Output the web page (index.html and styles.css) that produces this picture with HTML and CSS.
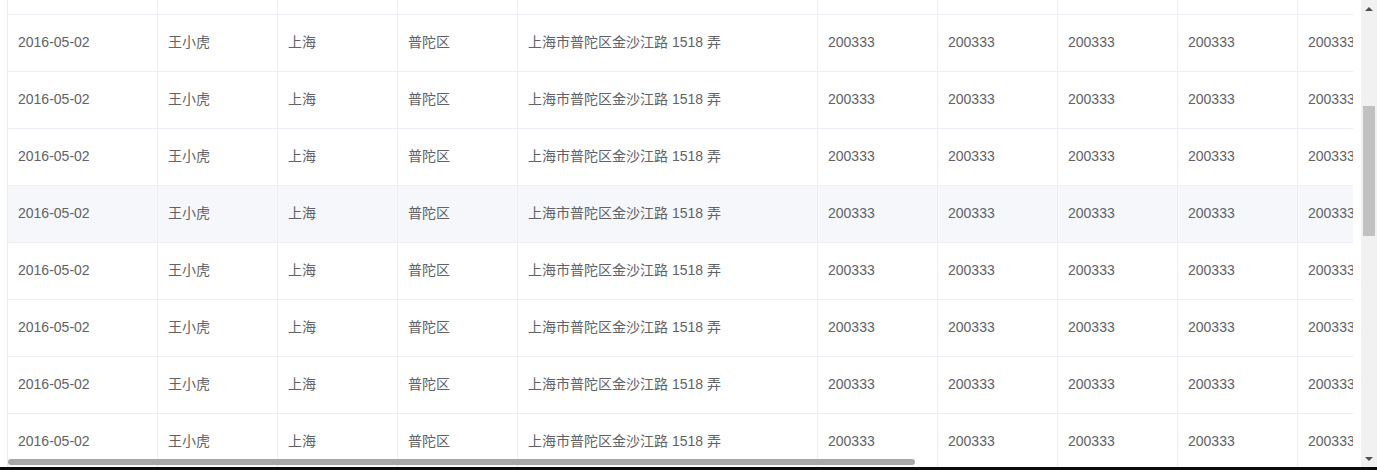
FILE: index.html
```html
<!DOCTYPE html>
<html lang="zh-CN">
<head>
<meta charset="utf-8">
<title>Table</title>
<link rel="stylesheet" href="styles.css">
</head>
<body>
<div class="screen">
  <div class="viewport">
    <div class="table-wrap">
      <div class="rows top">
        <div class="row"><div class="c w150"></div><div class="c w120"></div><div class="c w120"></div><div class="c w120"></div><div class="c w300"></div><div class="c w120"></div><div class="c w120"></div><div class="c w120"></div><div class="c w120"></div><div class="c w120"></div><div class="c w120"></div><div class="c w120"></div><div class="c w120"></div></div>
      </div>
      <div class="rows">
        <div class="row"><div class="c w150">2016-05-02</div><div class="c w120">王小虎</div><div class="c w120">上海</div><div class="c w120">普陀区</div><div class="c w300">上海市普陀区金沙江路 1518 弄</div><div class="c w120">200333</div><div class="c w120">200333</div><div class="c w120">200333</div><div class="c w120">200333</div><div class="c w120">200333</div><div class="c w120">200333</div><div class="c w120">200333</div><div class="c w120">200333</div></div>
        <div class="row"><div class="c w150">2016-05-02</div><div class="c w120">王小虎</div><div class="c w120">上海</div><div class="c w120">普陀区</div><div class="c w300">上海市普陀区金沙江路 1518 弄</div><div class="c w120">200333</div><div class="c w120">200333</div><div class="c w120">200333</div><div class="c w120">200333</div><div class="c w120">200333</div><div class="c w120">200333</div><div class="c w120">200333</div><div class="c w120">200333</div></div>
        <div class="row"><div class="c w150">2016-05-02</div><div class="c w120">王小虎</div><div class="c w120">上海</div><div class="c w120">普陀区</div><div class="c w300">上海市普陀区金沙江路 1518 弄</div><div class="c w120">200333</div><div class="c w120">200333</div><div class="c w120">200333</div><div class="c w120">200333</div><div class="c w120">200333</div><div class="c w120">200333</div><div class="c w120">200333</div><div class="c w120">200333</div></div>
        <div class="row hover"><div class="c w150">2016-05-02</div><div class="c w120">王小虎</div><div class="c w120">上海</div><div class="c w120">普陀区</div><div class="c w300">上海市普陀区金沙江路 1518 弄</div><div class="c w120">200333</div><div class="c w120">200333</div><div class="c w120">200333</div><div class="c w120">200333</div><div class="c w120">200333</div><div class="c w120">200333</div><div class="c w120">200333</div><div class="c w120">200333</div></div>
        <div class="row"><div class="c w150">2016-05-02</div><div class="c w120">王小虎</div><div class="c w120">上海</div><div class="c w120">普陀区</div><div class="c w300">上海市普陀区金沙江路 1518 弄</div><div class="c w120">200333</div><div class="c w120">200333</div><div class="c w120">200333</div><div class="c w120">200333</div><div class="c w120">200333</div><div class="c w120">200333</div><div class="c w120">200333</div><div class="c w120">200333</div></div>
        <div class="row"><div class="c w150">2016-05-02</div><div class="c w120">王小虎</div><div class="c w120">上海</div><div class="c w120">普陀区</div><div class="c w300">上海市普陀区金沙江路 1518 弄</div><div class="c w120">200333</div><div class="c w120">200333</div><div class="c w120">200333</div><div class="c w120">200333</div><div class="c w120">200333</div><div class="c w120">200333</div><div class="c w120">200333</div><div class="c w120">200333</div></div>
        <div class="row"><div class="c w150">2016-05-02</div><div class="c w120">王小虎</div><div class="c w120">上海</div><div class="c w120">普陀区</div><div class="c w300">上海市普陀区金沙江路 1518 弄</div><div class="c w120">200333</div><div class="c w120">200333</div><div class="c w120">200333</div><div class="c w120">200333</div><div class="c w120">200333</div><div class="c w120">200333</div><div class="c w120">200333</div><div class="c w120">200333</div></div>
        <div class="row"><div class="c w150">2016-05-02</div><div class="c w120">王小虎</div><div class="c w120">上海</div><div class="c w120">普陀区</div><div class="c w300">上海市普陀区金沙江路 1518 弄</div><div class="c w120">200333</div><div class="c w120">200333</div><div class="c w120">200333</div><div class="c w120">200333</div><div class="c w120">200333</div><div class="c w120">200333</div><div class="c w120">200333</div><div class="c w120">200333</div></div>
      </div>
      <div class="hbar"><div class="hthumb"></div></div>
    </div>
    <div class="vbar">
      <div class="arrow up"></div>
      <div class="vtrack"><div class="vthumb"></div></div>
      <div class="arrow down"></div>
    </div>
  </div>
  <div class="bottom-strip"></div>
</div>
</body>
</html>
```

FILE: styles.css
```css
html, body {
  margin: 0;
  padding: 0;
  background: #fff;
  overflow: hidden;
}
.screen {
  width: 1377px;
  height: 470px;
  display: flex;
  flex-direction: column;
  font-family: "Liberation Sans", Arial, "Noto Sans CJK SC", sans-serif;
  font-size: 14px;
  color: #606266;
}
.viewport {
  height: 467px;
  display: flex;
  overflow: hidden;
}
.table-wrap {
  margin-left: 7px;
  width: 1345px;
  border-left: 1px solid #ebeef5;
  height: 467px;
  overflow: hidden;
  position: relative;
  flex: none;
}
.rows {
  width: 2010px;
}
.rows.top {
  margin-top: -42px;
}
.row {
  display: flex;
  height: 57px;
  box-sizing: border-box;
  border-bottom: 1px solid #ebeef5;
}
.row.hover {
  background: #f5f7fa;
}
.c {
  flex: none;
  box-sizing: border-box;
  border-right: 1px solid #ebeef5;
  padding-left: 10px;
  padding-bottom: 2px;
  display: flex;
  align-items: center;
  white-space: nowrap;
  line-height: 23px;
  overflow: hidden;
}
.w150 { width: 150px; }
.w120 { width: 120px; }
.w300 { width: 300px; }

.hbar {
  position: absolute;
  left: 0;
  bottom: 2px;
  width: 100%;
  height: 6px;
}
.hthumb {
  width: 907px;
  height: 6px;
  border-radius: 3px;
  background: #a8a8a8;
}

.vbar {
  margin-left: 8px;
  width: 16px;
  flex: none;
  background: #f1f1f1;
  display: flex;
  flex-direction: column;
}
.arrow {
  height: 17px;
  flex: none;
  display: flex;
  align-items: center;
  justify-content: center;
}
.arrow::before {
  content: "";
  width: 0;
  height: 0;
  border-left: 4px solid transparent;
  border-right: 4px solid transparent;
}
.arrow.up::before {
  border-bottom: 4px solid #505050;
}
.arrow.down::before {
  border-top: 4px solid #505050;
}
.vtrack {
  flex: 1;
  padding-top: 89px;
}
.vthumb {
  margin-left: 2px;
  width: 12px;
  height: 130px;
  background: #c1c1c1;
}
.bottom-strip {
  height: 3px;
  background: #0b0b0b;
}
```
